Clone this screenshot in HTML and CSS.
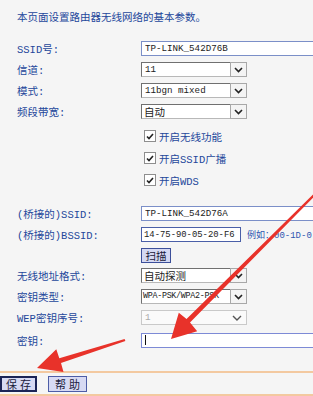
FILE: index.html
```html
<!DOCTYPE html>
<html lang="zh-CN">
<head>
    <meta charset="UTF-8">
    <meta name="viewport" content="width=device-width, initial-scale=1.0">
    <title>无线网络基本设置</title>
    <link rel="stylesheet" href="styles.css">
</head>
<body>
    <div class="page">
        <p class="intro">本页面设置路由器无线网络的基本参数。</p>

        <div class="form">
            <div class="row">
                <span class="lbl">SSID号:</span>
                <input class="text wide" type="text" value="TP-LINK_542D76B">
            </div>
            <div class="row">
                <span class="lbl">信道:</span>
                <div class="select"><span class="val">11</span><span class="drop"><svg width="9" height="6" viewBox="0 0 9 6"><polyline points="1,1 4.5,4.5 8,1" fill="none" stroke="#222" stroke-width="1.6"/></svg></span></div>
            </div>
            <div class="row">
                <span class="lbl">模式:</span>
                <div class="select"><span class="val">11bgn mixed</span><span class="drop"><svg width="9" height="6" viewBox="0 0 9 6"><polyline points="1,1 4.5,4.5 8,1" fill="none" stroke="#222" stroke-width="1.6"/></svg></span></div>
            </div>
            <div class="row">
                <span class="lbl">频段带宽:</span>
                <div class="select"><span class="val cjk">自动</span><span class="drop"><svg width="9" height="6" viewBox="0 0 9 6"><polyline points="1,1 4.5,4.5 8,1" fill="none" stroke="#222" stroke-width="1.6"/></svg></span></div>
            </div>

            <div class="checks">
                <div class="check"><span class="box"><svg width="8" height="7" viewBox="0 0 8 7"><polyline points="1,3.5 3,5.5 7,1" fill="none" stroke="#222" stroke-width="1.6"/></svg></span>开启无线功能</div>
                <div class="check"><span class="box"><svg width="8" height="7" viewBox="0 0 8 7"><polyline points="1,3.5 3,5.5 7,1" fill="none" stroke="#222" stroke-width="1.6"/></svg></span>开启SSID广播</div>
                <div class="check"><span class="box"><svg width="8" height="7" viewBox="0 0 8 7"><polyline points="1,3.5 3,5.5 7,1" fill="none" stroke="#222" stroke-width="1.6"/></svg></span>开启WDS</div>
            </div>

            <div class="bridge">
                <div class="row">
                    <span class="lbl">(桥接的)SSID:</span>
                    <input class="text wide" type="text" value="TP-LINK_542D76A">
                </div>
                <div class="row">
                    <span class="lbl">(桥接的)BSSID:</span>
                    <input class="text mac" type="text" value="14-75-90-05-20-F6">
                    <span class="hint">例如：00-1D-0</span>
                </div>
                <div class="row short">
                    <span class="lbl"></span>
                    <button class="scan" type="button">扫描</button>
                </div>
                <div class="row">
                    <span class="lbl">无线地址格式:</span>
                    <div class="select"><span class="val cjk">自动探测</span><span class="drop"><svg width="9" height="6" viewBox="0 0 9 6"><polyline points="1,1 4.5,4.5 8,1" fill="none" stroke="#222" stroke-width="1.6"/></svg></span></div>
                </div>
                <div class="row">
                    <span class="lbl">密钥类型:</span>
                    <div class="select"><span class="val narrow">WPA-PSK/WPA2-PSK</span><span class="drop"><svg width="9" height="6" viewBox="0 0 9 6"><polyline points="1,1 4.5,4.5 8,1" fill="none" stroke="#222" stroke-width="1.6"/></svg></span></div>
                </div>
                <div class="row">
                    <span class="lbl">WEP密钥序号:</span>
                    <div class="select disabled"><span class="val">1</span><span class="drop"><svg width="10" height="6" viewBox="0 0 10 6"><polyline points="1,1 5,5 9,1" fill="none" stroke="#555" stroke-width="1.4"/></svg></span></div>
                </div>
                <div class="row tall">
                    <span class="lbl">密钥:</span>
                    <div class="text wide key"><span class="caret"></span></div>
                </div>
            </div>
        </div>

        <div class="actions">
            <button class="btn save" type="button">保存</button>
            <button class="btn help" type="button">帮助</button>
        </div>

        <!-- red annotation arrows drawn over the form -->
        <svg class="marks" width="313" height="396" viewBox="0 0 313 396">
            <polygon points="314.2,193.2 315.8,194.8 190,322.5 197.2,331.2 171,339 178.8,312.8 186.5,319" fill="#e8322a"/>
            <polygon points="124.6,338.9 125.4,341.1 61,363.1 63.5,372.1 37,368 56.3,349.3 59.3,358.3" fill="#e8322a"/>
        </svg>
    </div>
</body>
</html>
```

FILE: styles.css
```css
body {
    margin: 0;
    background-color: #f5f5f5;
    font-family: "Liberation Mono", "Noto Sans CJK SC", monospace;
    font-size: 10.5px;
    color: #24479b;
    overflow: hidden;
}

.page {
    position: relative;
    height: 396px;
}

.intro {
    margin: 0 0 14px;
    padding: 10px 0 0 17px;
    line-height: 14px;
    font-family: "Noto Sans CJK SC", sans-serif;
}

.form {
    padding-left: 17px;
}

.row {
    display: flex;
    align-items: center;
    height: 21px;
    white-space: nowrap;
}

.row.short {
    height: 20px;
}

.row.tall {
    height: 24px;
}

.lbl {
    width: 124px;
    flex: none;
}

.text {
    flex: none;
    height: 15px;
    box-sizing: border-box;
    border: 1px solid #7b8fc8;
    background-color: #fff;
    padding: 0 3px;
    margin: 0;
    font-family: "Liberation Mono", monospace;
    font-size: 9.2px;
    color: #222;
    outline: none;
}

.text.wide {
    width: 200px;
}

.text.mac {
    width: 100px;
    padding: 0 2px;
    font-size: 8.9px;
    border-color: #4a5fa8;
}

.text.key {
    display: flex;
    align-items: center;
    border-color: #7d8ad6;
}

.caret {
    width: 1px;
    height: 10px;
    background-color: #111;
}

.hint {
    margin-left: 6px;
    color: #2d55b0;
    font-size: 9px;
}

.select {
    flex: none;
    display: flex;
    width: 106px;
    height: 15px;
    box-sizing: border-box;
    border: 1px solid #707070;
    border-right-color: #b8b8b8;
    border-bottom-color: #b8b8b8;
    background-color: #fff;
}

.select .val {
    flex: 1;
    overflow: hidden;
    padding-left: 3px;
    line-height: 13px;
    font-size: 9.2px;
    color: #222;
}

.select .val.cjk {
    font-family: "Noto Sans CJK SC", sans-serif;
    font-size: 10.5px;
    padding-left: 2px;
}

.select .val.narrow {
    font-size: 8.4px;
    letter-spacing: -0.3px;
    padding-left: 1px;
}

.select .drop {
    width: 15px;
    flex: none;
    display: flex;
    align-items: center;
    justify-content: center;
    border: 1px solid #a8a8a8;
    margin: -1px -1px -1px 0;
    background-color: #f4f4f4;
}

.select.disabled {
    border-color: #c9c9c9;
    background-color: #fafafa;
}

.select.disabled .val {
    color: #aaa;
}

.select.disabled .drop {
    width: 18px;
    border: none;
    margin: 0;
    background: none;
}

.checks {
    margin-top: 3px;
}

.check {
    display: flex;
    align-items: center;
    gap: 3px;
    height: 22px;
    padding-left: 127px;
    font-size: 10.5px;
}

.box {
    width: 12px;
    height: 12px;
    box-sizing: border-box;
    border: 1px solid #8e8e8e;
    background-color: #fff;
    display: flex;
    align-items: center;
    justify-content: center;
}

.bridge {
    margin-top: 12px;
}

.scan {
    height: 15px;
    width: 30px;
    padding: 0;
    box-sizing: border-box;
    border: 1px solid #3c4f9a;
    background-color: #d5d9f3;
    font-family: "Noto Sans CJK SC", sans-serif;
    font-size: 10.5px;
    line-height: 13px;
    color: #1a1a3a;
}

.actions {
    display: flex;
    gap: 11px;
    margin-top: 19px;
    padding: 3px 0 2px;
    border-top: 2px solid #f3c9a0;
    border-bottom: 2px solid #f3c9a0;
}

.btn {
    height: 16px;
    padding: 0 0 0 3px;
    box-sizing: border-box;
    border: 1px solid #4d5da6;
    background-color: #d7daf3;
    font-family: "Noto Sans CJK SC", sans-serif;
    font-size: 11px;
    line-height: 12px;
    letter-spacing: 3px;
    white-space: nowrap;
    text-align: center;
    color: #1c1c3c;
}

.btn.save {
    width: 37px;
    border: 2px solid #1b2456;
}

.btn.help {
    width: 39px;
}

.marks {
    position: absolute;
    left: 0;
    top: 0;
    pointer-events: none;
}
```
